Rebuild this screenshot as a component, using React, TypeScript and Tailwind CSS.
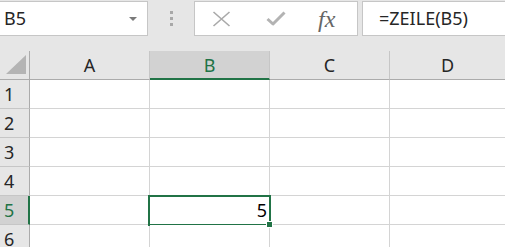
import React from 'react';

const COLUMNS = ['A', 'B', 'C', 'D'];
const ROWS = [1, 2, 3, 4, 5, 6];

function Toolbar() {
  return (
    <div className="flex h-[51px] items-start">
      <div className="mt-px flex h-[35px] w-[148px] items-center justify-between border-y border-r border-[#c6c6c6] bg-white pl-[4px] pr-[10px]">
        <span className="text-[18px] text-[#262626]">B5</span>
        <svg width="8" height="4" viewBox="0 0 8 4">
          <path d="M0 0 L8 0 L4 4 Z" fill="#7a7a7a" />
        </svg>
      </div>
      <div className="flex h-[37px] w-[46px] flex-col items-center justify-center gap-[3px]">
        <span className="h-[3px] w-[3px] bg-[#a8a8a8]" />
        <span className="h-[3px] w-[3px] bg-[#a8a8a8]" />
        <span className="h-[3px] w-[3px] bg-[#a8a8a8]" />
      </div>
      <div className="mt-px flex h-[35px] w-[164px] items-center border border-[#c6c6c6] bg-white">
        <svg className="ml-[17px]" width="19" height="16" viewBox="0 0 19 16">
          <path d="M1.5 1 L17.5 15 M17.5 1 L1.5 15" stroke="#a9a9a9" strokeWidth="1.6" fill="none" />
        </svg>
        <svg className="ml-[35px]" width="20" height="15" viewBox="0 0 20 15">
          <path d="M1.5 8 L7 13 L18.5 1.5" stroke="#b3b3b3" strokeWidth="3" fill="none" strokeLinejoin="round" />
        </svg>
        <span className="ml-[32px] font-['Liberation_Serif',serif] text-[24px] italic leading-none text-[#666666]">
          fx
        </span>
      </div>
      <div className="ml-[4px] mt-px flex h-[35px] flex-1 items-center border-y border-l border-[#c6c6c6] bg-white pl-[16px]">
        <span className="text-[18px] text-[#262626]">=ZEILE(B5)</span>
      </div>
    </div>
  );
}

function HeaderRow() {
  return (
    <div className="flex h-[29px]">
      <div className="relative w-[30px] border-b border-r border-[#ababab]">
        <svg className="absolute left-[6px] top-[4px]" width="20" height="19" viewBox="0 0 20 19">
          <path d="M20 0 L20 19 L0 19 Z" fill="#b4b4b4" />
        </svg>
      </div>
      {COLUMNS.map((c) => {
        const selected = c === 'B';
        return (
          <div
            key={c}
            className={
              selected
                ? 'flex w-[120px] items-center justify-center border-r border-b-2 border-r-[#c6c6c6] border-b-[#217346] bg-[#d2d2d2] pt-px text-[18px] text-[#217346]'
                : c === 'D'
                  ? 'flex flex-1 items-center justify-center border-b border-[#ababab] text-[18px] text-[#262626]'
                  : 'flex w-[120px] items-center justify-center border-r border-b border-r-[#c6c6c6] border-b-[#ababab] text-[18px] text-[#262626]'
            }
          >
            {c}
          </div>
        );
      })}
    </div>
  );
}

function Row({ n }: { n: number }) {
  const active = n === 5;
  return (
    <div className="flex h-[29px]">
      <div
        className={
          active
            ? 'flex w-[30px] items-center border-r-2 border-b border-r-[#217346] border-b-[#c6c6c6] bg-[#d2d2d2] pl-[4px] text-[18px] text-[#217346]'
            : 'flex w-[30px] items-center border-r border-b border-r-[#ababab] border-b-[#c6c6c6] pl-[4px] text-[18px] text-[#262626]'
        }
      >
        {n}
      </div>
      <div className="w-[120px] border-r border-b border-[#d4d4d4] bg-white" />
      <div className="relative flex w-[120px] items-center justify-end border-r border-b border-[#d4d4d4] bg-white pr-[2px]">
        {active && (
          <>
            <span className="text-[18px] text-[#000000]">5</span>
            <div className="absolute -bottom-[2px] -left-[2px] -right-[2px] -top-[1px] border-2 border-[#217346]" />
            <div className="absolute -bottom-[4px] -right-[4px] z-10 h-[7px] w-[7px] border border-white bg-[#217346]" />
          </>
        )}
      </div>
      <div className="w-[120px] border-r border-b border-[#d4d4d4] bg-white" />
      <div className="flex-1 border-b border-[#d4d4d4] bg-white" />
    </div>
  );
}

export default function App() {
  return (
    <div className="h-[247px] w-[505px] overflow-hidden bg-[#e6e6e6] font-['Noto_Sans','Open_Sans',sans-serif]">
      <Toolbar />
      <HeaderRow />
      {ROWS.map((n) => (
        <Row key={n} n={n} />
      ))}
    </div>
  );
}
